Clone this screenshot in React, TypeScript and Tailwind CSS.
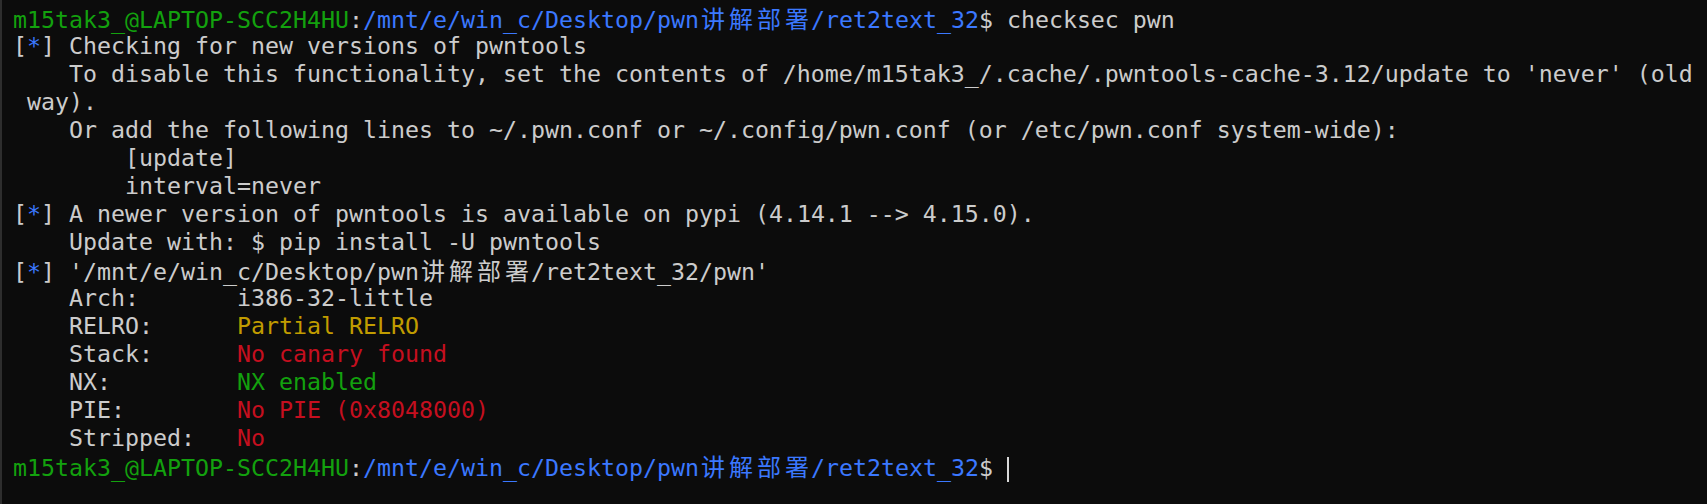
import React from 'react'

type Seg = { t: string; c?: string; cjk?: boolean }

const G = 'text-[#13a10e]'
const B = 'text-[#3b78ff]'
const Y = 'text-[#c19c00]'
const R = 'text-[#c50f1f]'

const path = (tail: string): Seg[] => [
  { t: '/mnt/e/win_c/Desktop/pwn', c: B },
  { t: '讲解部署', c: B, cjk: true },
  { t: tail, c: B },
]

const prompt: Seg[] = [
  { t: 'm15tak3_@LAPTOP-SCC2H4HU', c: G },
  { t: ':' },
  ...path('/ret2text_32'),
  { t: '$' },
]

const star = (rest: Seg[]): Seg[] => [{ t: '[' }, { t: '*', c: B }, { t: '] ' }, ...rest]

const lines: Seg[][] = [
  [...prompt, { t: ' checksec pwn' }],
  star([{ t: 'Checking for new versions of pwntools' }]),
  [{ t: "    To disable this functionality, set the contents of /home/m15tak3_/.cache/.pwntools-cache-3.12/update to 'never' (old" }],
  [{ t: ' way).' }],
  [{ t: '    Or add the following lines to ~/.pwn.conf or ~/.config/pwn.conf (or /etc/pwn.conf system-wide):' }],
  [{ t: '        [update]' }],
  [{ t: '        interval=never' }],
  star([{ t: 'A newer version of pwntools is available on pypi (4.14.1 --> 4.15.0).' }]),
  [{ t: '    Update with: $ pip install -U pwntools' }],
  star([{ t: "'/mnt/e/win_c/Desktop/pwn" }, { t: '讲解部署', cjk: true }, { t: "/ret2text_32/pwn'" }]),
  [{ t: '    Arch:       i386-32-little' }],
  [{ t: '    RELRO:      ' }, { t: 'Partial RELRO', c: Y }],
  [{ t: '    Stack:      ' }, { t: 'No canary found', c: R }],
  [{ t: '    NX:         ' }, { t: 'NX enabled', c: G }],
  [{ t: '    PIE:        ' }, { t: 'No PIE (0x8048000)', c: R }],
  [{ t: '    Stripped:   ' }, { t: 'No', c: R }],
]

// CJK glyphs take two terminal cells
const Segment = ({ s }: { s: Seg }) => {
  if (s.cjk) {
    return (
      <span className={s.c}>
        {s.t.split('').map((ch, i) => (
          <span
            key={i}
            className="inline-block w-[28px] text-center font-['Noto_Sans_CJK_SC',sans-serif] text-[24px]"
          >
            {ch}
          </span>
        ))}
      </span>
    )
  }
  return <span className={s.c}>{s.t}</span>
}

export default function App() {
  return (
    <div className="w-[1707px] h-[504px] overflow-hidden bg-[#0c0c0c] border-l-2 border-[#2e2e2e]">
      <div className="pt-[4px] pl-[11px] font-['DejaVu_Sans_Mono',monospace] text-[23.25px] leading-[28px] text-[#cccccc] whitespace-pre">
        {lines.map((line, i) => (
          <div key={i} className="h-[28px]">
            {line.map((s, j) => (
              <Segment key={j} s={s} />
            ))}
          </div>
        ))}
        <div className="h-[28px]">
          {prompt.map((s, j) => (
            <Segment key={j} s={s} />
          ))}
          <span> </span>
          <span className="inline-block w-[2px] h-[25px] bg-[#d9d9d9] align-[-6px]" />
        </div>
      </div>
    </div>
  )
}
